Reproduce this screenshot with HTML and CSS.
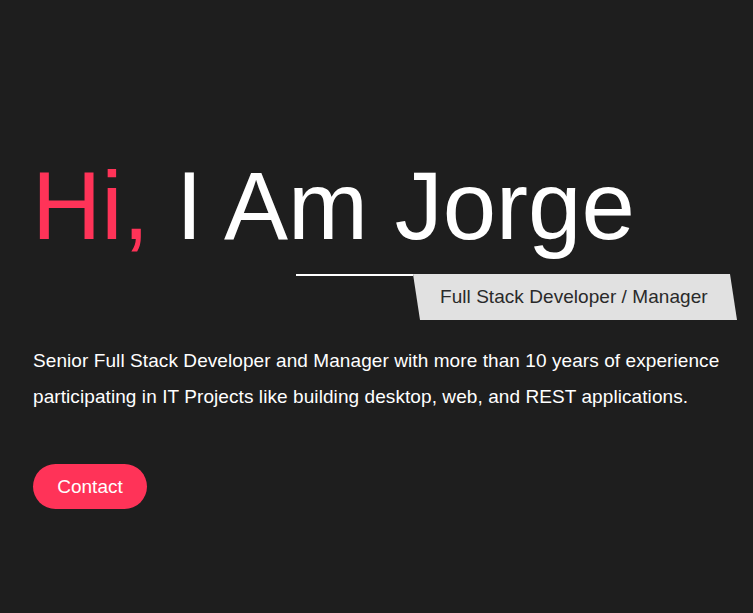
FILE: index.html
```html
<!DOCTYPE html>
<html lang="en">
<head>
<meta charset="utf-8">
<title>Jorge</title>
<link rel="stylesheet" href="styles.css">
</head>
<body>
<main class="hero">
  <h1 class="title"><span class="accent">Hi,</span> I Am Jorge</h1>
  <div class="role-row">
    <div class="role-line"></div>
    <div class="role-badge">Full Stack Developer / Manager</div>
  </div>
  <p class="intro">Senior Full Stack Developer and Manager with more than 10 years of experience participating in IT Projects like building desktop, web, and REST applications.</p>
  <a class="contact" href="#">Contact</a>
</main>
</body>
</html>
```
FILE: styles.css
```css
html, body {
  margin: 0;
  padding: 0;
  background: #1e1e1e;
  height: 100%;
}
body {
  font-family: "Liberation Sans", Arial, sans-serif;
  color: #ffffff;
}
.hero {
  padding: 151px 16px 0 33px;
  display: flex;
  flex-direction: column;
  align-items: flex-start;
}
.title {
  margin: 0;
  font-size: 96px;
  font-weight: 400;
  line-height: 110px;
  margin-left: -1px;
  color: #ffffff;
}
.accent {
  color: #ff3358;
}
.role-row {
  align-self: stretch;
  display: flex;
  justify-content: flex-end;
  align-items: flex-start;
  margin-top: 13px;
}
.role-line {
  width: 117px;
  height: 2px;
  background: #ffffff;
}
.role-badge {
  background: #e1e1e1;
  color: #2a2a2a;
  font-size: 19px;
  letter-spacing: 0.05px;
  height: 46px;
  line-height: 46px;
  padding: 0 26px 0 27px;
  width: 271px;
  clip-path: polygon(0 0, 317px 0, 100% 100%, 7px 100%);
  white-space: nowrap;
}
.intro {
  margin: 23px 0 0 0;
  font-size: 19px;
  letter-spacing: 0.08px;
  line-height: 36px;
  max-width: 705px;
}
.contact {
  margin-top: 49px;
  display: inline-block;
  background: #ff3358;
  color: #ffffff;
  text-decoration: none;
  font-size: 19px;
  height: 45px;
  line-height: 45px;
  padding: 0 24px 0 24px;
  width: 66px;
  text-align: center;
  border-radius: 23px;
}
```
